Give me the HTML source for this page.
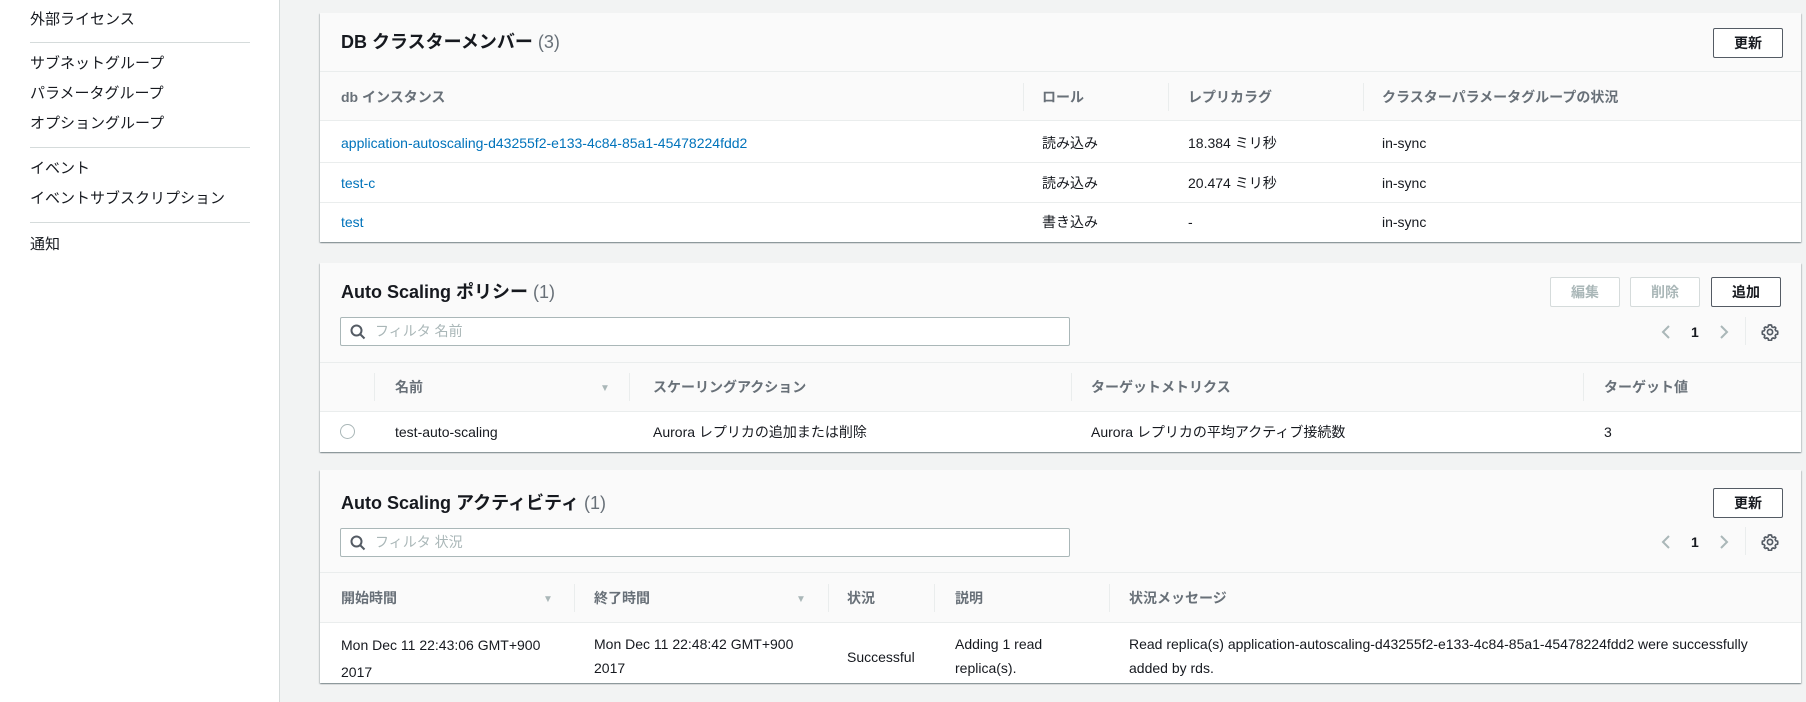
<!DOCTYPE html>
<html><head><meta charset="utf-8"><style>
*{box-sizing:border-box;margin:0;padding:0}
body{width:1806px;height:702px;overflow:hidden;background:#f2f3f3;font-family:"Liberation Sans","Noto Sans CJK JP",sans-serif;font-size:14px;color:#16191f;position:relative}
.a{position:absolute;white-space:nowrap;line-height:18px}
#side{position:absolute;left:0;top:0;width:280px;height:702px;background:#fff;border-right:1px solid #d5dbdb}
#side .i{position:absolute;left:30px;font-size:15px;color:#16191f;line-height:20px}
#side .s{position:absolute;left:30px;width:220px;height:1px;background:#d5dbdb}
.card{position:absolute;left:320px;width:1481px;background:#fff;box-shadow:0 1px 1px 0 rgba(0,28,36,.3),1px 1px 1px 0 rgba(0,28,36,.15),-1px 1px 1px 0 rgba(0,28,36,.15);overflow:hidden}
.hd{position:absolute;left:0;top:0;width:100%;background:#fafafa;border-bottom:1px solid #eaeded}
.t{font-size:18px;font-weight:bold;line-height:22px}
.t span{font-weight:normal;color:#687078}
.th{position:absolute;left:0;width:100%;background:#fafafa;border-bottom:1px solid #eaeded}
.h{font-weight:bold;color:#687078;line-height:18px}
.sep{position:absolute;width:1px;height:28px;background:#eaeded}
.rl{position:absolute;left:0;width:100%;height:1px;background:#eaeded}
.lk{color:#0073bb}
.btn{position:absolute;height:30px;border:1px solid #545b64;border-radius:2px;background:#fff;font-weight:bold;font-size:14px;text-align:center;line-height:28px;color:#16191f}
.btn.d{border-color:#d5dbdb;color:#aab7b8}
.srch{position:absolute;height:29px;border:1px solid #aab7b8;border-radius:2px;background:#fff;color:#aab7b8;font-size:14px;line-height:27px;padding-left:34px}
.arr{color:#aab7b8;font-size:10px}
</style></head><body>
<div id="side">
<div class="i" style="top:10px">外部ライセンス</div>
<div class="s" style="top:42px"></div>
<div class="i" style="top:54px">サブネットグループ</div>
<div class="i" style="top:84px">パラメータグループ</div>
<div class="i" style="top:114px">オプショングループ</div>
<div class="s" style="top:147px"></div>
<div class="i" style="top:159px">イベント</div>
<div class="i" style="top:189px">イベントサブスクリプション</div>
<div class="s" style="top:222px"></div>
<div class="i" style="top:235px">通知</div>
</div>

<!-- card 1 -->
<div class="card" style="top:13px;height:229px">
<div class="hd" style="height:59px"></div>
<div class="a t" style="left:21px;top:18px">DB クラスターメンバー <span>(3)</span></div>
<div class="btn" style="left:1393px;top:15px;width:70px">更新</div>
<div class="th" style="top:59px;height:49px"></div>
<div class="a h" style="left:21px;top:75px">db インスタンス</div>
<div class="sep" style="left:703px;top:70px"></div>
<div class="a h" style="left:722px;top:75px">ロール</div>
<div class="sep" style="left:848px;top:70px"></div>
<div class="a h" style="left:868px;top:75px">レプリカラグ</div>
<div class="sep" style="left:1043px;top:70px"></div>
<div class="a h" style="left:1062px;top:75px">クラスターパラメータグループの状況</div>
<div class="a lk" style="left:21px;top:121px">application-autoscaling-d43255f2-e133-4c84-85a1-45478224fdd2</div>
<div class="a" style="left:722px;top:121px">読み込み</div>
<div class="a" style="left:868px;top:121px">18.384 ミリ秒</div>
<div class="a" style="left:1062px;top:121px">in-sync</div>
<div class="rl" style="top:149px"></div>
<div class="a lk" style="left:21px;top:161px">test-c</div>
<div class="a" style="left:722px;top:161px">読み込み</div>
<div class="a" style="left:868px;top:161px">20.474 ミリ秒</div>
<div class="a" style="left:1062px;top:161px">in-sync</div>
<div class="rl" style="top:189px"></div>
<div class="a lk" style="left:21px;top:200px">test</div>
<div class="a" style="left:722px;top:200px">書き込み</div>
<div class="a" style="left:868px;top:200px">-</div>
<div class="a" style="left:1062px;top:200px">in-sync</div>
</div>

<!-- card 2 -->
<div class="card" style="top:263px;height:189px">
<div class="hd" style="height:149px;border-bottom:1px solid #eaeded"></div>
<div class="rl" style="top:99px"></div>
<div class="a t" style="left:21px;top:18px">Auto Scaling ポリシー <span>(1)</span></div>
<div class="btn d" style="left:1230px;top:14px;width:70px">編集</div>
<div class="btn d" style="left:1310px;top:14px;width:70px">削除</div>
<div class="btn" style="left:1391px;top:14px;width:70px">追加</div>
<div class="srch" style="left:20px;top:54px;width:730px">フィルタ 名前</div>
<svg class="a" style="left:30px;top:61px" width="16" height="16" viewBox="0 0 16 16"><circle cx="6.5" cy="6.5" r="5" fill="none" stroke="#545b64" stroke-width="2"/><path d="M10 10l4.5 4.5" stroke="#545b64" stroke-width="2"/></svg>
<svg class="a" style="left:1340px;top:61px" width="12" height="16" viewBox="0 0 12 16"><path d="M9 2L3 8l6 6" fill="none" stroke="#aab7b8" stroke-width="2"/></svg>
<div class="a" style="left:1371px;top:60px;font-weight:bold">1</div>
<div class="a" style="left:1398px;top:61px"><svg width="12" height="16" viewBox="0 0 12 16"><path d="M3 2l6 6-6 6" fill="none" stroke="#aab7b8" stroke-width="2"/></svg></div>
<div class="sep" style="left:1425px;top:54px"></div>
<svg class="a" style="left:1441px;top:60px" width="18" height="18" viewBox="0 0 24 24"><path d="M12 2.5l2 .3.5 2.3 1.6.9 2.2-.8 1.4 1.4-.8 2.2.9 1.6 2.3.5.3 2-.3 2-2.3.5-.9 1.6.8 2.2-1.4 1.4-2.2-.8-1.6.9-.5 2.3-2 .3-2-.3-.5-2.3-1.6-.9-2.2.8-1.4-1.4.8-2.2-.9-1.6-2.3-.5-.3-2 .3-2 2.3-.5.9-1.6-.8-2.2 1.4-1.4 2.2.8 1.6-.9.5-2.3z" fill="none" stroke="#545b64" stroke-width="2.2"/><circle cx="12" cy="12" r="3.5" fill="none" stroke="#545b64" stroke-width="2.2"/></svg>
<div class="sep" style="left:54px;top:110px"></div>
<div class="a h" style="left:75px;top:115px">名前</div>
<div class="a arr" style="left:280px;top:117px">▼</div>
<div class="sep" style="left:309px;top:110px"></div>
<div class="a h" style="left:333px;top:115px">スケーリングアクション</div>
<div class="sep" style="left:751px;top:110px"></div>
<div class="a h" style="left:771px;top:115px">ターゲットメトリクス</div>
<div class="sep" style="left:1263px;top:110px"></div>
<div class="a h" style="left:1284px;top:115px">ターゲット値</div>
<div class="a" style="left:20px;top:161px;width:15px;height:15px;border:1px solid #aab7b8;border-radius:50%"></div>
<div class="a" style="left:75px;top:160px">test-auto-scaling</div>
<div class="a" style="left:333px;top:160px">Aurora レプリカの追加または削除</div>
<div class="a" style="left:771px;top:160px">Aurora レプリカの平均アクティブ接続数</div>
<div class="a" style="left:1284px;top:160px">3</div>
</div>

<!-- card 3 -->
<div class="card" style="top:470px;height:213px">
<div class="hd" style="height:103px"></div>
<div class="a t" style="left:21px;top:22px">Auto Scaling アクティビティ <span>(1)</span></div>
<div class="btn" style="left:1393px;top:18px;width:70px">更新</div>
<div class="srch" style="left:20px;top:58px;width:730px">フィルタ 状況</div>
<svg class="a" style="left:30px;top:65px" width="16" height="16" viewBox="0 0 16 16"><circle cx="6.5" cy="6.5" r="5" fill="none" stroke="#545b64" stroke-width="2"/><path d="M10 10l4.5 4.5" stroke="#545b64" stroke-width="2"/></svg>
<svg class="a" style="left:1340px;top:64px" width="12" height="16" viewBox="0 0 12 16"><path d="M9 2L3 8l6 6" fill="none" stroke="#aab7b8" stroke-width="2"/></svg>
<div class="a" style="left:1371px;top:63px;font-weight:bold">1</div>
<div class="a" style="left:1398px;top:64px"><svg width="12" height="16" viewBox="0 0 12 16"><path d="M3 2l6 6-6 6" fill="none" stroke="#aab7b8" stroke-width="2"/></svg></div>
<div class="sep" style="left:1425px;top:57px"></div>
<svg class="a" style="left:1441px;top:63px" width="18" height="18" viewBox="0 0 24 24"><path d="M12 2.5l2 .3.5 2.3 1.6.9 2.2-.8 1.4 1.4-.8 2.2.9 1.6 2.3.5.3 2-.3 2-2.3.5-.9 1.6.8 2.2-1.4 1.4-2.2-.8-1.6.9-.5 2.3-2 .3-2-.3-.5-2.3-1.6-.9-2.2.8-1.4-1.4.8-2.2-.9-1.6-2.3-.5-.3-2 .3-2 2.3-.5.9-1.6-.8-2.2 1.4-1.4 2.2.8 1.6-.9.5-2.3z" fill="none" stroke="#545b64" stroke-width="2.2"/><circle cx="12" cy="12" r="3.5" fill="none" stroke="#545b64" stroke-width="2.2"/></svg>
<div class="th" style="top:103px;height:50px"></div>
<div class="a h" style="left:21px;top:119px">開始時間</div>
<div class="a arr" style="left:223px;top:121px">▼</div>
<div class="sep" style="left:254px;top:114px"></div>
<div class="a h" style="left:274px;top:119px">終了時間</div>
<div class="a arr" style="left:476px;top:121px">▼</div>
<div class="sep" style="left:508px;top:114px"></div>
<div class="a h" style="left:527px;top:119px">状況</div>
<div class="sep" style="left:614px;top:114px"></div>
<div class="a h" style="left:635px;top:119px">説明</div>
<div class="sep" style="left:789px;top:114px"></div>
<div class="a h" style="left:809px;top:119px">状況メッセージ</div>
<div class="a" style="left:21px;top:162px;line-height:27px">Mon Dec 11 22:43:06 GMT+900<br>2017</div>
<div class="a" style="left:274px;top:162px;line-height:24px">Mon Dec 11 22:48:42 GMT+900<br>2017</div>
<div class="a" style="left:527px;top:178px">Successful</div>
<div class="a" style="left:635px;top:162px;line-height:24px">Adding 1 read<br>replica(s).</div>
<div class="a" style="left:809px;top:162px;line-height:24px">Read replica(s) application-autoscaling-d43255f2-e133-4c84-85a1-45478224fdd2 were successfully<br>added by rds.</div>
</div>
</body></html>
